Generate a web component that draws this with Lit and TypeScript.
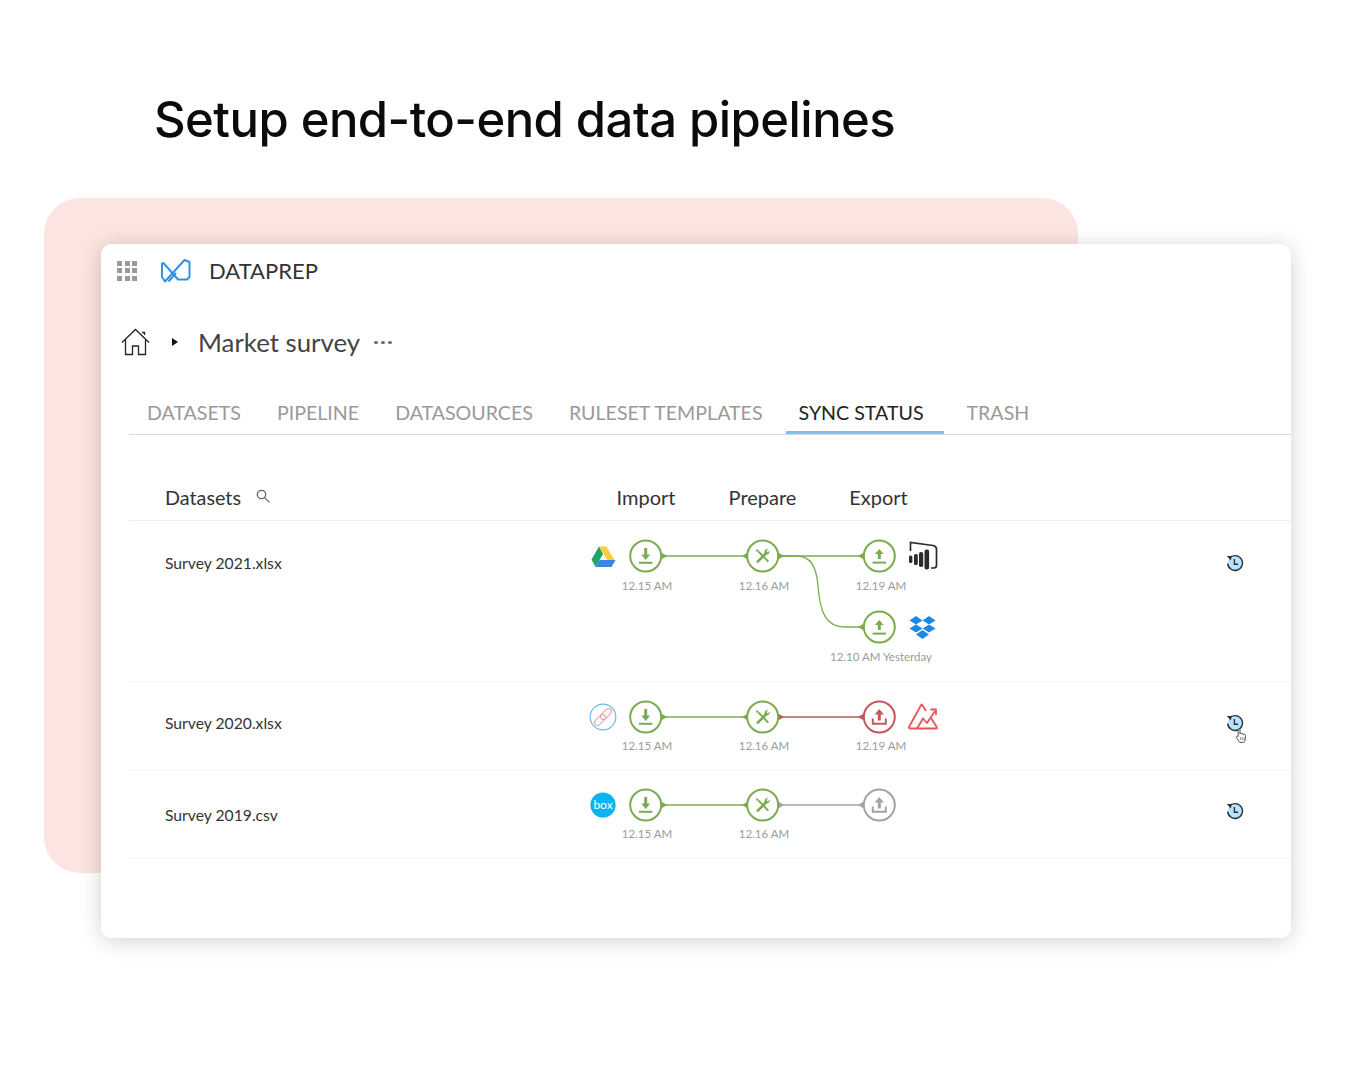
import { LitElement, css, html, svg } from "lit";
import { customElement } from "lit/decorators.js";

const GREEN = "#7cab4f";
const RED = "#c2585b";
const GREY = "#a3a3a3";
const NODE_X = [65.7, 182.7, 299.3];

type Kind = "import" | "prepare" | "export";

// glyph inside the round node, drawn around 0,0
function glyph(kind: Kind, color: string, tray = false) {
  if (kind === "import") {
    return svg`<path d="M0-8V1" stroke=${color} stroke-width="3" fill="none"/>
      <path d="M-4.4-1.5H4.4L0 4Z" fill=${color}/>
      <path d="M-6.7 6.8H6.7" stroke=${color} stroke-width="2" fill="none"/>`;
  }
  if (kind === "export" && tray) {
    return svg`<path d="M0-3V3.5" stroke=${color} stroke-width="3" fill="none"/>
      <path d="M-4.6-2.5H4.6L0-8Z" fill=${color}/>
      <path d="M-6.5 1.5V6.7H6.5V1.5" stroke=${color} stroke-width="2" fill="none"/>`;
  }
  if (kind === "export") {
    return svg`<path d="M0-2V3" stroke=${color} stroke-width="3" fill="none"/>
      <path d="M-4.4-2H4.4L0-7Z" fill=${color}/>
      <path d="M-6.7 6.6H6.7" stroke=${color} stroke-width="2" fill="none"/>`;
  }
  return svg`<path d="M-4.4-4.6 5.6 5.6" stroke=${color} stroke-width="2" fill="none"/>
    <path d="M-6.4-4.6-4.6-6.4" stroke=${color} stroke-width="1.8" fill="none"/>
    <path d="M3-2.2-5 5.6" stroke=${color} stroke-width="2.6" stroke-linecap="round" fill="none"/>
    <path d="M1.8-3.2A3.2 3.2 0 0 1 5.6-7L3.8-5 5.2-3.6 7-5.4A3.2 3.2 0 0 1 3.4-1.6Z" fill=${color}/>`;
}

function node(x: number, y: number, kind: Kind, color: string, tray = false) {
  return svg`<g transform="translate(${x} ${y})">
    <circle r="15.5" fill="#fff" stroke=${color} stroke-width="2"/>
    ${glyph(kind, color, tray)}
  </g>`;
}

function link(x1: number, x2: number, y: number, color: string) {
  return svg`<path d="M${x1} ${y}H${x2}" stroke=${color} stroke-width="1.3" fill="none"/>
    <path d="M${x1} ${y - 3}V${y + 3}L${x1 + 5} ${y}Z" fill=${color}/>
    <path d="M${x2} ${y - 3}V${y + 3}L${x2 - 5} ${y}Z" fill=${color}/>`;
}

function time(x: number, y: number, text: string) {
  return svg`<text class="time" x=${x} y=${y} text-anchor="middle">${text}</text>`;
}

const driveIcon = svg`<g transform="translate(23 37)">
  <path d="M-4-11.5H3.5L12.5 3.5H5Z" fill="#f9cf3f"/>
  <path d="M-4-11.5 0-4-7.5 9-11.5 1.5Z" fill="#1fa463"/>
  <path d="M-7.5 9-3.5 2H12.5L8.5 9Z" fill="#3b83e8"/>
</g>`;

const powerBiIcon = svg`<g transform="translate(328 20)">
  <path d="M2.5 10V1.5L25 4.5C27.5 5 28.5 6 28.5 8V24C28.5 26 27.5 27 26 27H23" fill="none" stroke="#2b2b2b" stroke-width="1.7"/>
  <rect x="1" y="14.5" width="3.4" height="7.5" rx="1.5" fill="#2b2b2b"/>
  <rect x="6" y="13" width="3.8" height="11" rx="1.6" fill="#2b2b2b"/>
  <rect x="11" y="11" width="4.2" height="15" rx="1.8" fill="#2b2b2b"/>
  <rect x="16.5" y="8.5" width="4.6" height="20" rx="2" fill="#2b2b2b"/>
</g>`;

const dropboxIcon = svg`<g transform="translate(342.5 107)" fill="#1e88e5">
  <path d="M-6.5-12 0-7.5-6.5-3.5-13-7.5Z"/>
  <path d="M6.5-12 13-7.5 6.5-3.5 0-7.5Z"/>
  <path d="M-6.5-3.5 0 .5-6.5 4.5-13 .5Z"/>
  <path d="M6.5-3.5 13 .5 6.5 4.5 0 .5Z"/>
  <path d="M0 2 6.5 6.5 0 11-6.5 6.5Z"/>
</g>`;

const linkIcon = svg`<g transform="translate(23 35)">
  <circle r="12.8" fill="#fff" stroke="#6db9ec" stroke-width="1.2"/>
  <g fill="none" stroke="#e9a5a5" stroke-width="1.1">
    <rect x="-6.5" y="-3" width="13" height="6" rx="3" transform="rotate(-45) translate(4.2 0)"/>
    <rect x="-6.5" y="-3" width="13" height="6" rx="3" transform="rotate(-45) translate(-4.2 0)"/>
  </g>
</g>`;

const analyticsIcon = svg`<g transform="translate(328 21)" fill="none" stroke="#e8555a" stroke-width="1.8" stroke-linejoin="round">
  <path d="M13.7 1 1 24Q.5 25.5 2 25.5H28Q29.5 25.5 28.7 24L23 15"/>
  <path d="M13.7 1 18 8"/>
  <path d="M9 25.5 15 15.5 19 20 27 8"/>
  <path d="M22.5 6.5H28V12"/>
</g>`;

const boxIcon = svg`<g transform="translate(23 34)">
  <circle r="12.6" fill="#0bb3f0"/>
  <text class="box" y="3.6" text-anchor="middle">box</text>
</g>`;

const historyIcon = html`<svg class="hist" width="18" height="18" viewBox="0 0 18 18">
  <circle cx="9" cy="9" r="7.4" fill="#bde3fa"/>
  <path d="M3.4 4.3A7.4 7.4 0 1 1 1.7 9.6" fill="none" stroke="#26323a" stroke-width="1.4"/>
  <path d="M0.8 2.2 5.6 1.8 5 6.4Z" fill="#26323a"/>
  <path d="M8.4 5V10.2H12.2" fill="none" stroke="#26323a" stroke-width="1.4"/>
</svg>`;

const handCursor = html`<svg class="hand" width="14" height="16" viewBox="0 0 14 16">
  <path d="M3.2 1.8C3.2.6 5 .6 5 1.8V6C5 5 6.8 5 6.8 6.2 6.9 5.2 8.6 5.3 8.6 6.6 8.8 5.8 10.4 6 10.4 7.2V10.6C10.4 12.6 9.4 13.6 8.8 14.4H4.6L1.4 9.6C.8 8.4 2.2 7.4 3.2 8.6Z" fill="#fff" stroke="#555" stroke-width="1"/>
  <path d="M5.4 9.2V12M7.2 9.2V12M9 9.2V12" stroke="#777" stroke-width=".8"/>
</svg>`;

@customElement("app-root")
export class AppRoot extends LitElement {
  static styles = css`
    :host {
      display: block;
      position: relative;
      width: 1356px;
      height: 1080px;
      background: #fff;
      overflow: hidden;
      font-family: "Lato", sans-serif;
      color: #333;
    }
    h1 {
      margin: 0;
      padding: 90px 0 48px 154px;
      font-family: "Inter", sans-serif;
      font-weight: 500;
      font-size: 49px;
      line-height: 60px;
      letter-spacing: -0.55px;
      color: #0b0b0b;
    }
    .stage {
      position: relative;
      padding: 46px 65px 0 101px;
    }
    .blush {
      position: absolute;
      left: 44px;
      top: 0;
      width: 1034px;
      height: 675px;
      background: #fce4e0;
      border-radius: 36px;
    }
    .card {
      position: relative;
      height: 694px;
      background: #fff;
      border-radius: 10px;
      box-shadow: 0 3px 22px rgba(0, 0, 0, 0.18);
    }
    .top {
      display: flex;
      align-items: center;
      height: 53px;
      padding-bottom: 2px;
      padding-left: 16px;
    }
    .apps {
      display: grid;
      grid-template-columns: repeat(3, 5px);
      grid-auto-rows: 5px;
      gap: 2.5px;
      margin-right: 23px;
    }
    .apps i {
      background: #9a9a9a;
    }
    .brand {
      margin-left: 17px;
      font-size: 22px;
      color: #333;
    }
    .crumb {
      display: flex;
      align-items: center;
      height: 86px;
      padding-left: 20px;
    }
    .crumb .caret {
      width: 0;
      height: 0;
      margin: 0 20px 0 22px;
      border-left: 6px solid #111;
      border-top: 4.5px solid transparent;
      border-bottom: 4.5px solid transparent;
    }
    .crumb .name {
      font-size: 25.8px;
      color: #444;
    }
    .dots {
      display: flex;
      gap: 3px;
      margin-left: 14px;
    }
    .dots i {
      width: 4px;
      height: 3px;
      border-radius: 50%;
      background: #666;
    }
    .tabs {
      display: flex;
      height: 50px;
      margin-left: 28px;
      border-bottom: 1px solid #d9d9d9;
      box-sizing: border-box;
    }
    .tab {
      padding: 15px 18px 0;
      font-size: 19.6px;
      line-height: 26px;
      color: #999;
      box-sizing: border-box;
    }
    .tab.active {
      margin: 0 5px;
      padding: 15px 20px 0 13px;
      color: #222;
      border-bottom: 3px solid #6cc6f0;
      height: 49px;
    }
    .table {
      margin-left: 28px;
    }
    .head {
      display: grid;
      grid-template-columns: 458px 118px 115px 117px;
      padding-top: 50px;
      height: 35px;
      font-size: 20px;
      line-height: 24px;
      color: #333;
      border-bottom: 1px solid #f0f0f0;
    }
    .head .first {
      display: flex;
      align-items: flex-start;
      padding-left: 36px;
      font-size: 19.8px;
      gap: 15px;
    }
    .head .first svg {
      margin-top: 4px;
    }
    .head span {
      text-align: center;
    }
    .row {
      display: grid;
      grid-template-columns: 451px 370px 1fr;
      border-bottom: 1px solid #f5f5f5;
    }
    .file {
      padding-left: 36px;
      font-size: 15.7px;
      line-height: 20px;
      color: #333;
    }
    .flow {
      display: block;
    }
    .flow .time {
      font-family: "Lato", sans-serif;
      font-size: 11.5px;
      fill: #9b9b9b;
    }
    .flow .box {
      font-family: "Lato", sans-serif;
      font-size: 12px;
      fill: #fff;
    }
    .actions {
      position: relative;
      padding-left: 276px;
    }
    .hist {
      display: block;
    }
    .hand {
      position: absolute;
      left: 285px;
      top: 46px;
    }
  `;

  private row1() {
    return svg`
      ${driveIcon}
      <path d="M199 35H217C232 35 237 50 238 65C240 90 245 106 265 106H283" stroke=${GREEN} stroke-width="1.3" fill="none"/>
      ${link(82, 167, 35, GREEN)}
      ${link(199, 283, 35, GREEN)}
      <path d="M283 103V109L278 106Z" fill=${GREEN}/>
      ${node(NODE_X[0], 35, "import", GREEN)}
      ${node(NODE_X[1], 35, "prepare", GREEN)}
      ${node(NODE_X[2], 35, "export", GREEN)}
      ${node(NODE_X[2], 106, "export", GREEN)}
      ${powerBiIcon}
      ${dropboxIcon}
      ${time(67, 69, "12.15 AM")}
      ${time(184, 69, "12.16 AM")}
      ${time(301, 69, "12.19 AM")}
      ${time(301, 140, "12.10 AM Yesterday")}
    `;
  }

  private row2() {
    return svg`
      ${linkIcon}
      ${link(82, 167, 35, GREEN)}
      ${link(199, 283, 35, RED)}
      ${node(NODE_X[0], 35, "import", GREEN)}
      ${node(NODE_X[1], 35, "prepare", GREEN)}
      ${node(NODE_X[2], 35, "export", RED, true)}
      ${analyticsIcon}
      ${time(67, 68, "12.15 AM")}
      ${time(184, 68, "12.16 AM")}
      ${time(301, 68, "12.19 AM")}
    `;
  }

  private row3() {
    return svg`
      ${boxIcon}
      ${link(82, 167, 34, GREEN)}
      ${link(199, 283, 34, GREY)}
      ${node(NODE_X[0], 34, "import", GREEN)}
      ${node(NODE_X[1], 34, "prepare", GREEN)}
      ${node(NODE_X[2], 34, "export", GREY, true)}
      ${time(67, 67, "12.15 AM")}
      ${time(184, 67, "12.16 AM")}
    `;
  }

  private renderRow(name: string, height: number, nameTop: number, histTop: number, flow: unknown, hand = false) {
    return html`<div class="row" style="height:${height}px">
      <div class="file" style="padding-top:${nameTop}px">${name}</div>
      <svg class="flow" width="370" height=${height} viewBox="0 0 370 ${height}">${flow}</svg>
      <div class="actions" style="padding-top:${histTop}px">${historyIcon}${hand ? handCursor : ""}</div>
    </div>`;
  }

  render() {
    const tabs = ["DATASETS", "PIPELINE", "DATASOURCES", "RULESET TEMPLATES", "SYNC STATUS", "TRASH"];
    return html`
      <h1>Setup end-to-end data pipelines</h1>
      <div class="stage">
        <div class="blush"></div>
        <div class="card">
          <div class="top">
            <div class="apps">${Array.from({ length: 9 }, () => html`<i></i>`)}</div>
            <svg width="32" height="26" viewBox="0 0 32 26" fill="none" stroke="#2b90e6" stroke-width="1.9" stroke-linejoin="round">
              <path d="M2 4.5V19L5 23.5 24.5 2 29.5 4V19L27 21.5H18L3 4.5"/>
              <path d="M8.5 23.5 16 15"/>
            </svg>
            <div class="brand">DATAPREP</div>
          </div>
          <div class="crumb">
            <svg width="29" height="28" viewBox="0 0 29 28" fill="none" stroke="#222" stroke-width="1.3">
              <path d="M1 14.5 14.5 1.5 28 14.5"/>
              <path d="M4.5 12V26.5H11.5V18H17.5V26.5H24.5V12"/>
              <path d="M21 4.5H23.5V7"/>
            </svg>
            <span class="caret"></span>
            <span class="name">Market survey</span>
            <span class="dots"><i></i><i></i><i></i></span>
          </div>
          <div class="tabs">
            ${tabs.map((t) => html`<div class="tab ${t === "SYNC STATUS" ? "active" : ""}">${t}</div>`)}
          </div>
          <div class="table">
            <div class="head">
              <div class="first">
                Datasets
                <svg width="14" height="14" viewBox="0 0 14 14" fill="none" stroke="#666" stroke-width="1.3">
                  <circle cx="5.5" cy="5.5" r="4.2"/>
                  <path d="M8.6 8.6 13.4 13.4"/>
                </svg>
              </div>
              <span>Import</span>
              <span>Prepare</span>
              <span>Export</span>
            </div>
            ${this.renderRow("Survey 2021.xlsx", 160, 32, 33, this.row1())}
            ${this.renderRow("Survey 2020.xlsx", 88, 31, 32, this.row2(), true)}
            ${this.renderRow("Survey 2019.csv", 87, 34, 31, this.row3())}
          </div>
        </div>
      </div>
    `;
  }
}
